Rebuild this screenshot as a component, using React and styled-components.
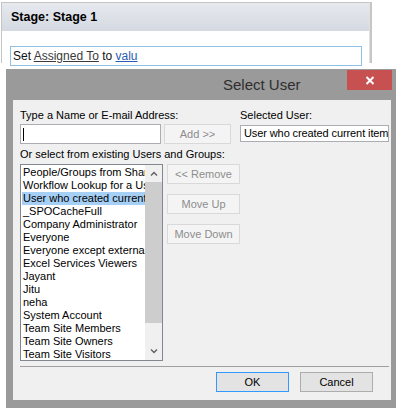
import React from 'react';
import styled, { createGlobalStyle } from 'styled-components';

const GlobalStyle = createGlobalStyle`
  html, body {
    margin: 0;
    padding: 0;
    background: #ffffff;
  }
  body {
    font-family: "Liberation Sans", Arial, sans-serif;
  }
`;

const Page = styled.div`
  position: relative;
  box-sizing: border-box;
  width: 399px;
  height: 413px;
  padding: 2px 0 0 1px;
  background: #ffffff;
  overflow: hidden;
`;

const Panel = styled.div`
  box-sizing: border-box;
  width: 369px;
  height: 61px;
  border: 1px solid #c4c4c4;
  border-right-color: #e2e2e2;
  border-bottom: none;
  box-shadow: 2px 0 0 #c6c6c6;
  background: #ffffff;
`;

const PanelHeader = styled.div`
  height: 28px;
  padding-left: 9px;
  background: linear-gradient(#e6e9ee, #d4d9e1);
  font-weight: bold;
  font-size: 12.5px;
  line-height: 29px;
  color: #000;
`;

const ActionBox = styled.div`
  box-sizing: border-box;
  width: 352px;
  height: 20px;
  margin: 15px 0 0 8px;
  padding-left: 2px;
  border: 1px solid #8fc0e6;
  font-size: 12px;
  line-height: 18px;
  color: #111;
  white-space: nowrap;
`;

const Token = styled.span`
  color: ${(p) => (p.$link ? '#2a5db0' : '#3a3a3a')};
  text-decoration: underline;
`;

const Dialog = styled.div`
  position: absolute;
  left: 6px;
  top: 69px;
  box-sizing: border-box;
  width: 390px;
  height: 339px;
  padding: 0 5px 8px 7px;
  background: #9a9a9a;
  display: flex;
  flex-direction: column;
`;

const TitleBar = styled.div`
  height: 31px;
  display: flex;
  align-items: flex-start;
`;

const Title = styled.div`
  margin-left: 210px;
  font-family: "Segoe UI", "Liberation Sans", sans-serif;
  font-size: 15px;
  line-height: 31px;
  color: #2e2e2e;
`;

const CloseButton = styled.div`
  margin: 1px -1px 0 auto;
  width: 45px;
  height: 20px;
  background: #c75050;
  display: flex;
  align-items: center;
  justify-content: center;
`;

const Client = styled.div`
  flex: 1;
  box-sizing: border-box;
  padding: 0 2px 0 7px;
  background: #f0f0f0;
  font-size: 11px;
  color: #000;
`;

const TopRow = styled.div`
  display: flex;
`;

const Column = styled.div`
  width: ${(p) => p.$width}px;
  margin-left: ${(p) => p.$offset || 0}px;
`;

const Label = styled.div`
  margin-top: ${(p) => p.$top}px;
  line-height: 14px;
  white-space: nowrap;
`;

const FieldRow = styled.div`
  display: flex;
  gap: 3px;
  margin-top: 2px;
`;

const TextInput = styled.div`
  box-sizing: border-box;
  width: 141px;
  height: 20px;
  padding: 3px 0 0 2px;
  border: 1px solid #abadb3;
  background: #ffffff;
`;

const Caret = styled.div`
  width: 1px;
  height: 13px;
  background: #000;
`;

const SelectedBox = styled.div`
  box-sizing: border-box;
  width: 149px;
  height: 17px;
  margin-top: 3px;
  padding-left: 3px;
  border: 1px solid #abadb3;
  background: #ffffff;
  line-height: 15px;
  letter-spacing: -0.1px;
  white-space: nowrap;
  overflow: hidden;
`;

const Button = styled.div`
  box-sizing: border-box;
  width: ${(p) => p.$width || 73}px;
  height: 20px;
  border: 1px solid ${(p) => (p.$disabled ? '#d9d9d9' : p.$focused ? '#3399ff' : '#adadad')};
  background: ${(p) => (p.$disabled ? '#f4f4f4' : '#e3e3e3')};
  color: ${(p) => (p.$disabled ? '#8d8d8d' : '#000')};
  display: flex;
  align-items: center;
  justify-content: center;
  white-space: nowrap;
`;

const ListRow = styled.div`
  display: flex;
  gap: 4px;
  margin-top: 3px;
`;

const ListBox = styled.div`
  box-sizing: border-box;
  width: 143px;
  height: 197px;
  border: 1px solid #828790;
  background: #ffffff;
  display: flex;
`;

const Items = styled.div`
  flex: 1;
  min-width: 0;
  padding-top: 1px;
  overflow: hidden;
`;

const Item = styled.div`
  height: 13px;
  margin-left: 1px;
  padding-left: 1px;
  line-height: 13px;
  white-space: nowrap;
  overflow: hidden;
  background: ${(p) => (p.$selected ? '#a6cff5' : 'transparent')};
`;

const ScrollBar = styled.div`
  width: 17px;
  display: flex;
  flex-direction: column;
  background: #f0f0f0;
`;

const ScrollArrow = styled.div`
  height: 17px;
  display: flex;
  align-items: center;
  justify-content: center;
`;

const ScrollTrack = styled.div`
  flex: 1;
`;

const Thumb = styled.div`
  height: 141px;
  background: #cdcdcd;
`;

const ButtonColumn = styled.div`
  display: flex;
  flex-direction: column;
  gap: 10px;
`;

const Separator = styled.div`
  width: 369px;
  height: 1px;
  margin-top: 5px;
  background: #a0a0a0;
`;

const Footer = styled.div`
  display: flex;
  justify-content: flex-end;
  gap: 11px;
  margin: 5px 16px 0 0;
`;

const Chevron = ({ up }) => (
  <svg width="8" height="5" viewBox="0 0 8 5">
    <path
      d={up ? 'M1 4.5 L4 1.5 L7 4.5' : 'M1 0.5 L4 3.5 L7 0.5'}
      fill="none"
      stroke="#606060"
      strokeWidth="1.4"
    />
  </svg>
);

const users = [
  'People/Groups from SharePoint site',
  'Workflow Lookup for a User...',
  'User who created current item',
  '_SPOCacheFull',
  'Company Administrator',
  'Everyone',
  'Everyone except external users',
  'Excel Services Viewers',
  'Jayant',
  'Jitu',
  'neha',
  'System Account',
  'Team Site Members',
  'Team Site Owners',
  'Team Site Visitors',
];

const App = () => {
  return (
    <Page>
      <GlobalStyle />
      <Panel>
        <PanelHeader>Stage: Stage 1</PanelHeader>
        <ActionBox>
          Set <Token>Assigned To</Token> to <Token $link>valu</Token>
        </ActionBox>
      </Panel>

      <Dialog>
        <TitleBar>
          <Title>Select User</Title>
          <CloseButton>
            <svg width="10" height="9" viewBox="0 0 10 9">
              <path d="M1.5 1 L8.5 8 M8.5 1 L1.5 8" stroke="#fff" strokeWidth="2" />
            </svg>
          </CloseButton>
        </TitleBar>

        <Client>
          <TopRow>
            <Column $width={211}>
              <Label $top={8}>Type a Name or E-mail Address:</Label>
              <FieldRow>
                <TextInput>
                  <Caret />
                </TextInput>
                <Button $width={67} $disabled>Add &gt;&gt;</Button>
              </FieldRow>
            </Column>
            <Column $width={149} $offset={9}>
              <Label $top={8}>Selected User:</Label>
              <SelectedBox>User who created current item</SelectedBox>
            </Column>
          </TopRow>

          <Label $top={3}>Or select from existing Users and Groups:</Label>
          <ListRow>
            <ListBox>
              <Items>
                {users.map((u, i) => (
                  <Item key={u} $selected={i === 2}>{u}</Item>
                ))}
              </Items>
              <ScrollBar>
                <ScrollArrow><Chevron up /></ScrollArrow>
                <ScrollTrack><Thumb /></ScrollTrack>
                <ScrollArrow><Chevron /></ScrollArrow>
              </ScrollBar>
            </ListBox>
            <ButtonColumn>
              <Button $disabled>&lt;&lt; Remove</Button>
              <Button $disabled>Move Up</Button>
              <Button $disabled>Move Down</Button>
            </ButtonColumn>
          </ListRow>

          <Separator />
          <Footer>
            <Button $focused>OK</Button>
            <Button>Cancel</Button>
          </Footer>
        </Client>
      </Dialog>
    </Page>
  );
};

export default App;
